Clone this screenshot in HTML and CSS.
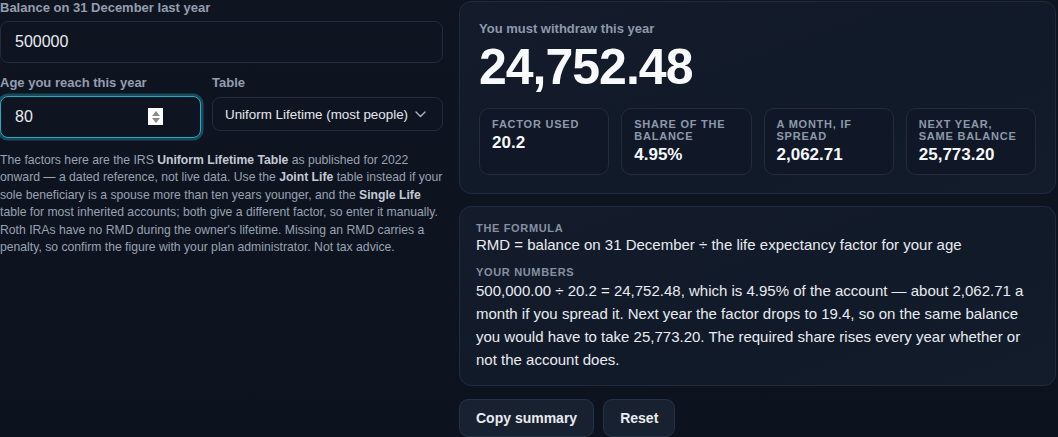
FILE: index.html
```html
<!DOCTYPE html>
<html lang="en">
<head>
<meta charset="utf-8">
<title>RMD calculator</title>
<link rel="stylesheet" href="styles.css">
</head>
<body>
<main class="layout">
  <section class="inputs">
    <div class="field">
      <label class="label" for="balance">Balance on 31 December last year</label>
      <input class="control" id="balance" type="text" value="500000">
    </div>
    <div class="row">
      <div class="field">
        <label class="label" for="age">Age you reach this year</label>
        <div class="spin-wrap">
          <input class="control control-age is-focused" id="age" type="number" value="80">
          <span class="spinner"><span class="tri-up"></span><span class="tri-down"></span></span>
        </div>
      </div>
      <div class="field">
        <label class="label" for="table">Table</label>
        <div class="select-wrap">
          <select class="select" id="table">
            <option>Uniform Lifetime (most people)</option>
          </select>
          <svg class="chev" width="11" height="7" viewBox="0 0 11 7"><path d="M1 1 L5.5 5.5 L10 1" fill="none" stroke="#aeb6c4" stroke-width="1.4" stroke-linecap="round" stroke-linejoin="round"/></svg>
        </div>
      </div>
    </div>
    <p class="note">The factors here are the IRS <b>Uniform Lifetime Table</b> as published for 2022 onward — a dated reference, not live data. Use the <b>Joint Life</b> table instead if your sole beneficiary is a spouse more than ten years younger, and the <b>Single Life</b> table for most inherited accounts; both give a different factor, so enter it manually. Roth IRAs have no RMD during the owner's lifetime. Missing an RMD carries a penalty, so confirm the figure with your plan administrator. Not tax advice.</p>
  </section>

  <section class="results">
    <div class="card hero">
      <div class="hero-label">You must withdraw this year</div>
      <div class="hero-value">24,752.48</div>
      <div class="stats">
        <div class="stat"><div class="stat-label">Factor used</div><div class="stat-value">20.2</div></div>
        <div class="stat"><div class="stat-label">Share of the balance</div><div class="stat-value">4.95%</div></div>
        <div class="stat"><div class="stat-label">A month, if spread</div><div class="stat-value">2,062.71</div></div>
        <div class="stat"><div class="stat-label">Next year, same balance</div><div class="stat-value">25,773.20</div></div>
      </div>
    </div>
    <div class="card formula">
      <div class="eyebrow">The formula</div>
      <div class="formula-text">RMD = balance on 31 December ÷ the life expectancy factor for your age</div>
      <div class="eyebrow eyebrow-gap">Your numbers</div>
      <p class="numbers">500,000.00 ÷ 20.2 = 24,752.48, which is 4.95% of the account — about 2,062.71 a month if you spread it. Next year the factor drops to 19.4, so on the same balance you would have to take 25,773.20. The required share rises every year whether or not the account does.</p>
    </div>
    <div class="actions">
      <button class="btn">Copy summary</button>
      <button class="btn">Reset</button>
    </div>
  </section>
</main>
</body>
</html>
```

FILE: styles.css
```css
* { box-sizing: border-box; }
html, body { height: 100%; }
body {
  margin: 0;
  background: linear-gradient(180deg, #0e1521 0%, #0c131e 100%);
  color: #e5e7eb;
  font-family: "Liberation Sans", Arial, sans-serif;
  overflow: hidden;
}
.layout {
  display: grid;
  grid-template-columns: 443px 597px;
  column-gap: 16px;
  align-items: start;
}
.field { display: flex; flex-direction: column; margin-bottom: 12px; }
.label {
  font-size: 13px;
  line-height: 16px;
  font-weight: 700;
  color: #949eae;
  margin-bottom: 5px;
}
.control {
  height: 42px;
  width: 100%;
  padding: 0 14px;
  font-family: inherit;
  font-size: 16px;
  color: #e8ebf0;
  background: #0e1521;
  border: 1px solid #222c3b;
  border-radius: 8px;
  outline: none;
}
.control-age { padding-right: 38px; -moz-appearance: textfield; }
.control-age::-webkit-inner-spin-button,
.control-age::-webkit-outer-spin-button { -webkit-appearance: none; margin: 0; }
.is-focused {
  border: 1.5px solid #27a9bf;
  box-shadow: 0 0 0 2.5px rgba(30, 120, 140, 0.55);
}
.row {
  display: grid;
  grid-template-columns: 201px 1fr;
  column-gap: 11px;
}
.row .field { margin-bottom: 0; }
.spin-wrap { position: relative; }
.spinner {
  position: absolute;
  left: 148px;
  top: 12px;
  width: 15px;
  height: 17px;
  background: #ffffff;
  display: flex;
  flex-direction: column;
  align-items: center;
  justify-content: center;
  gap: 2px;
}
.tri-up, .tri-down { width: 0; height: 0; border-left: 4.5px solid transparent; border-right: 4.5px solid transparent; }
.tri-up { border-bottom: 5px solid #8a8a8a; }
.tri-down { border-top: 5px solid #8a8a8a; }
.select-wrap { position: relative; margin-top: 1px; }
.select {
  -webkit-appearance: none;
  appearance: none;
  width: 100%;
  height: 34px;
  padding: 0 30px 0 12px;
  font-family: inherit;
  font-size: 13.4px;
  color: #e5e7eb;
  background: #0e1521;
  border: 1px solid #222c3b;
  border-radius: 8px;
  outline: none;
}
.chev { position: absolute; right: 17px; top: 14px; }
.note {
  margin: 14px 0 0;
  font-size: 12.2px;
  line-height: 17.4px;
  color: #98a2b2;
}
.note b { color: #c3cad5; font-weight: 700; }

.results {
  display: flex;
  flex-direction: column;
  gap: 12px;
  padding-top: 1px;
}
.card {
  border: 1px solid #212b3b;
  border-radius: 12px;
  background: linear-gradient(160deg, #141c2b 0%, #111a28 60%, #131c2b 100%);
}
.hero { padding: 19px 19px 18px; }
.hero-label {
  font-size: 13px;
  line-height: 16px;
  font-weight: 700;
  color: #8e99ab;
}
.hero-value {
  margin-top: 5px;
  font-size: 50px;
  line-height: 50px;
  font-weight: 700;
  letter-spacing: -1px;
  color: #f8fafc;
}
.stats {
  margin-top: 16px;
  display: grid;
  grid-template-columns: repeat(4, 1fr);
  gap: 12px;
}
.stat {
  height: 67px;
  padding: 9px 12px 0;
  border: 1px solid #222c3d;
  border-radius: 10px;
  background: #101827;
}
.stat-label {
  font-size: 11px;
  line-height: 12px;
  font-weight: 700;
  letter-spacing: 0.07em;
  text-transform: uppercase;
  color: #8d98aa;
}
.stat-value {
  margin-top: 3px;
  font-size: 17px;
  line-height: 20px;
  font-weight: 700;
  color: #f5f7fa;
}
.formula { padding: 14px 16px 14px; }
.eyebrow {
  font-size: 11px;
  line-height: 14px;
  font-weight: 700;
  letter-spacing: 0.06em;
  text-transform: uppercase;
  color: #8590a2;
}
.eyebrow-gap { margin-top: 10px; }
.formula-text {
  font-size: 15px;
  line-height: 20px;
  color: #e8ebf0;
}
.numbers {
  margin: 0;
  font-size: 15px;
  line-height: 23px;
  color: #e8ebf0;
}
.actions { display: flex; gap: 9px; margin-top: 1px; }
.btn {
  height: 38px;
  padding: 0 16px;
  font-family: inherit;
  font-size: 14px;
  font-weight: 700;
  color: #e8ebf0;
  background: #182130;
  border: 1px solid #263143;
  border-radius: 9px;
}
```
